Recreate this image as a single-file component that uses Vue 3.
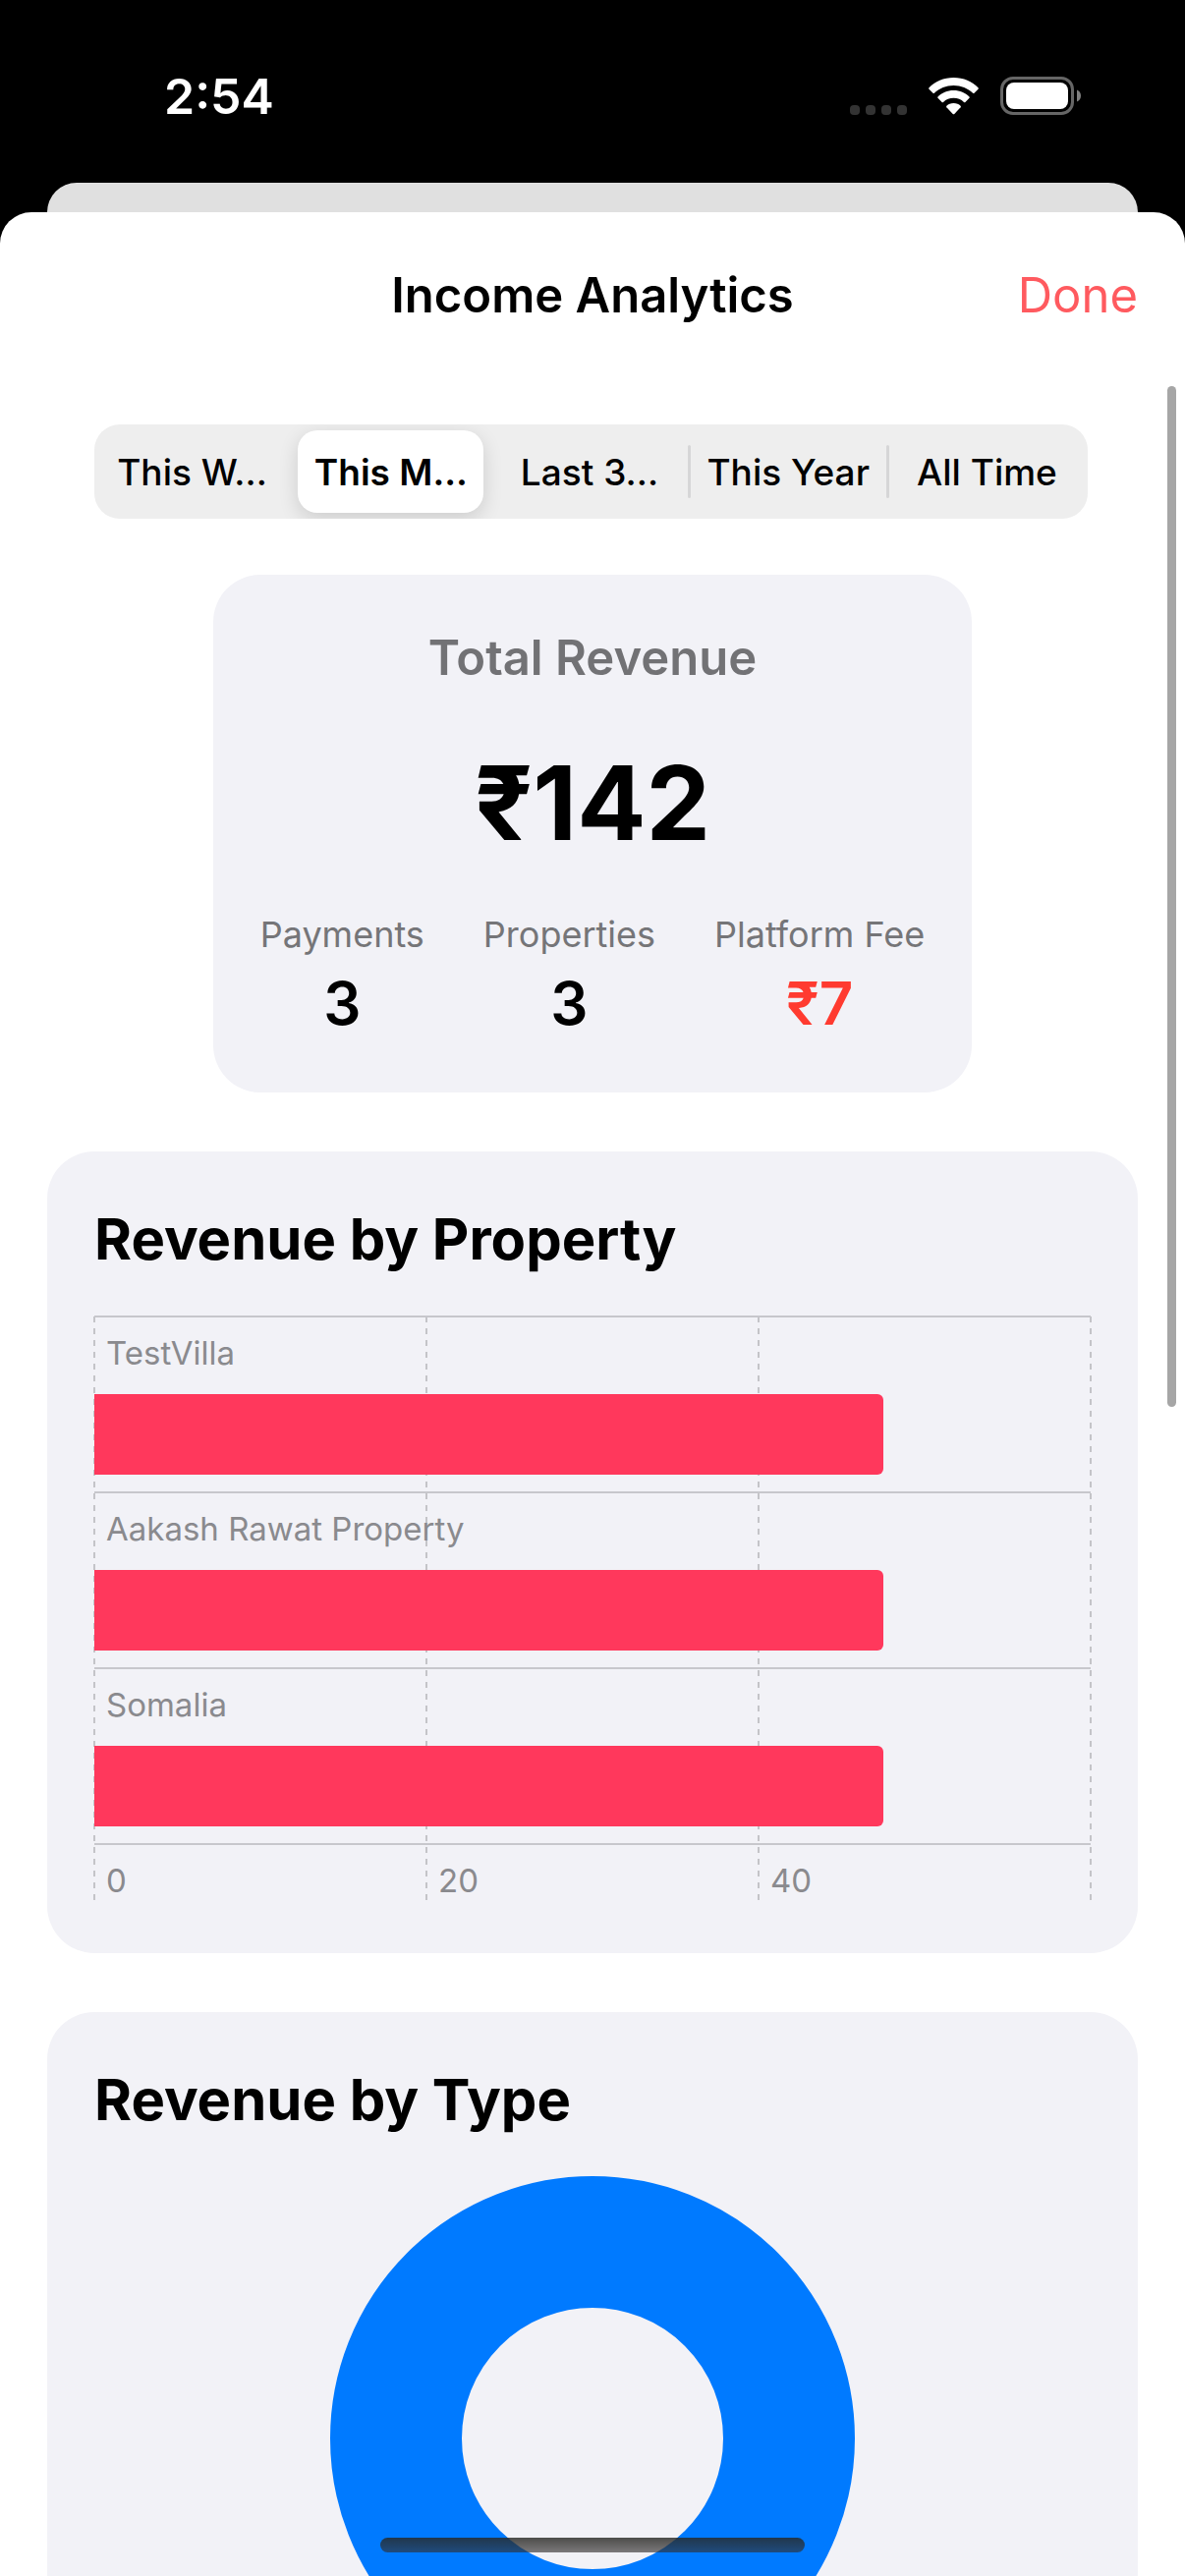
<script setup>
import { ref } from 'vue'

const periods = [
  { label: 'This W…', name: 'This Week' },
  { label: 'This M…', name: 'This Month' },
  { label: 'Last 3…', name: 'Last 3 Months' },
  { label: 'This Year', name: 'This Year' },
  { label: 'All Time', name: 'All Time' },
]
const selected = ref(1)

const stats = [
  { label: 'Payments', value: '3' },
  { label: 'Properties', value: '3' },
  { label: 'Platform Fee', value: '₹7', fee: true },
]

const axisMax = 60
const ticks = [0, 20, 40]
const properties = [
  { name: 'TestVilla', amount: 47.5 },
  { name: 'Aakash Rawat Property', amount: 47.5 },
  { name: 'Somalia', amount: 47.5 },
]
</script>

<template>
  <div class="screen">
    <div class="status">
      <span class="time">2:54</span>
      <div class="indicators">
        <span class="dots"><i v-for="n in 4" :key="n"></i></span>
        <svg class="wifi" viewBox="0 0 51 38" width="51" height="38" aria-hidden="true">
          <g fill="#fff">
            <path d="M25.500 0C35.500 0 44.500 4 50.500 10.200Q51.200 11 50.500 11.700L46.500 15.700Q45.800 16.300 45.100 15.700C40 10.700 33 7.900 25.500 7.900S11 10.700 5.900 15.700Q5.200 16.300 4.500 15.700L.5 11.700Q-.2 11 .5 10.200C6.500 4 15.500 0 25.500 0Z" />
            <path d="M25.500 13C32 13 37.500 15.500 41.500 19.400Q42.200 20.100 41.500 20.800L37.400 24.900Q36.700 25.500 36 24.900C33.200 22.300 29.500 20.800 25.500 20.800S17.800 22.300 15 24.900Q14.300 25.500 13.600 24.900L9.500 20.800Q8.800 20.100 9.500 19.400C13.500 15.500 19 13 25.500 13Z" />
            <path d="M25.500 26C28.500 26 30.800 27 32.600 28.700Q33.300 29.400 32.600 30.200L26.300 37Q25.500 37.700 24.700 37L18.400 30.200Q17.700 29.400 18.400 28.700C20.200 27 22.500 26 25.500 26Z" />
          </g>
        </svg>
        <svg class="battery" viewBox="0 0 82 39" width="82" height="39" aria-hidden="true">
          <rect x="1.500" y="1.500" width="72" height="36" rx="11.500" fill="none" stroke="#666" stroke-width="3" />
          <rect x="6" y="6" width="63" height="27" rx="8" fill="#fff" />
          <path d="M78 13.500C80.500 14.500 82 16.800 82 19.500S80.500 24.500 78 25.500Z" fill="#808080" />
        </svg>
      </div>
    </div>

    <div class="behind"></div>

    <main class="sheet">
      <header class="header">
        <h1>Income Analytics</h1>
        <button type="button" class="done">Done</button>
      </header>

      <div class="segments" role="group" aria-label="Period">
        <template v-for="(p, i) in periods" :key="p.name">
          <span v-if="i > 0" class="divider" :class="{ hidden: i === selected || i === selected + 1 }"></span>
          <button
            type="button"
            class="segment"
            :class="{ active: i === selected }"
            :aria-pressed="i === selected"
            :title="p.name"
            @click="selected = i"
          >{{ p.label }}</button>
        </template>
      </div>

      <section class="card summary">
        <h2 class="summary-title">Total Revenue</h2>
        <p class="amount">₹142</p>
        <dl class="stats">
          <div v-for="s in stats" :key="s.label">
            <dt>{{ s.label }}</dt>
            <dd :class="{ fee: s.fee }">{{ s.value }}</dd>
          </div>
        </dl>
      </section>

      <section class="card">
        <h2 class="card-title">Revenue by Property</h2>
        <div class="chart">
          <div class="grid-lines"><i v-for="n in 4" :key="n"></i></div>
          <div class="rows">
            <div v-for="p in properties" :key="p.name" class="row">
              <span class="chart-label">{{ p.name }}</span>
              <div class="bar" :style="{ width: (p.amount / axisMax) * 100 + '%' }"></div>
            </div>
            <div class="axis">
              <span v-for="t in ticks" :key="t" class="chart-label">{{ t }}</span>
            </div>
          </div>
        </div>
      </section>

      <section class="card">
        <h2 class="card-title">Revenue by Type</h2>
        <svg class="donut" viewBox="0 0 534 534" role="img" aria-label="Revenue by type">
          <circle cx="267" cy="267" r="200" fill="none" stroke="#007aff" stroke-width="134" />
        </svg>
      </section>
    </main>

    <div class="scrollbar"></div>
    <div class="home"></div>
  </div>
</template>

<style>
body {
  margin: 0;
  background: #000;
}
</style>

<style scoped>
.screen {
  position: relative;
  display: flex;
  flex-direction: column;
  height: 100vh;
  overflow: hidden;
  background: #000;
  color: #000;
  font-family: Inter, "Liberation Sans", sans-serif;
}
h1, h2, p, dl, dd {
  margin: 0;
}
button {
  border: 0;
  padding: 0;
  background: none;
  color: inherit;
  font-family: inherit;
}
.status {
  flex: none;
  display: flex;
  justify-content: space-between;
  align-items: center;
  height: 186px;
  padding: 9px 106px 0 167px;
  box-sizing: border-box;
  color: #fff;
}
.time {
  font-size: 50px;
  line-height: 60px;
  font-weight: 600;
}
.indicators {
  display: flex;
  align-items: center;
}
.dots {
  display: flex;
  gap: 6px;
  margin: 28px 22px 0 0;
}
.dots i {
  width: 10px;
  height: 10px;
  border-radius: 4px;
  background: #333;
}
.battery {
  margin-left: 22px;
}
.behind {
  flex: none;
  height: 60px;
  margin: 0 48px -30px;
  border-radius: 30px 30px 0 0;
  background: #e0e0e0;
}
.sheet {
  flex: 1;
  min-height: 0;
  display: flex;
  flex-direction: column;
  overflow: hidden;
  border-radius: 32px 32px 0 0;
  background: #fff;
}
.header {
  flex: none;
  display: grid;
  grid-template-columns: 1fr auto 1fr;
  align-items: center;
  height: 170px;
  padding: 0 48px;
}
.header h1 {
  grid-column: 2;
  font-size: 49px;
  line-height: 60px;
  font-weight: 600;
}
.done {
  justify-self: end;
  color: #ff5a5f;
  font-size: 49px;
  line-height: 60px;
}
.segments {
  flex: none;
  display: flex;
  align-items: center;
  height: 96px;
  margin: 46px 99px 0 96px;
  padding-right: 3px;
  box-sizing: border-box;
  border-radius: 26px;
  overflow: hidden;
  background: #eeeeee;
}
.segment {
  flex: 1 1 0;
  height: 84px;
  margin: 0 5px;
  border-radius: 20px;
  font-size: 37px;
  font-weight: 500;
  white-space: nowrap;
}
.segment.active {
  background: #fff;
  font-weight: 600;
  box-shadow: 0 6px 20px rgba(0, 0, 0, 0.14);
}
.divider {
  width: 3px;
  height: 54px;
  border-radius: 2px;
  background: #d6d6d7;
}
.divider.hidden {
  visibility: hidden;
}
.card {
  flex: none;
  display: flex;
  flex-direction: column;
  margin: 60px 48px 0;
  padding: 48px 48px 54px;
  border-radius: 48px;
  background: #f2f2f7;
}
.summary {
  align-self: center;
  gap: 48px;
  margin-top: 57px;
  padding-bottom: 57px;
  text-align: center;
}
.summary-title {
  color: #727275;
  font-size: 49px;
  line-height: 74px;
  font-weight: 600;
}
.amount {
  font-size: 104px;
  line-height: 124px;
  font-weight: 700;
}
.stats {
  display: flex;
  gap: 60px;
}
.stats dt {
  margin-bottom: 12px;
  color: #757578;
  font-size: 36px;
  line-height: 48px;
}
.stats dd {
  font-size: 60px;
  line-height: 68px;
  font-weight: 600;
}
.stats .fee {
  color: #ff3b30;
}
.card-title {
  margin-bottom: 37px;
  font-size: 58px;
  line-height: 82px;
  font-weight: 700;
}
.chart {
  display: grid;
}
.grid-lines,
.rows {
  grid-area: 1 / 1;
}
.grid-lines {
  display: flex;
  justify-content: space-between;
  margin: 1px -1px 0;
}
.grid-lines i {
  width: 2px;
  background: repeating-linear-gradient(#c4c4c8 0 6px, transparent 6px 12px);
}
.rows {
  z-index: 1;
}
.row {
  border-top: 2px solid #c7c7cc;
  padding: 16px 0 17px;
}
.chart-label {
  display: block;
  padding-left: 12px;
  color: #8a8a8e;
  font-size: 33px;
  line-height: 40px;
}
.bar {
  height: 82px;
  margin-top: 22px;
  border-radius: 0 6px 6px 0;
  background: #ff385c;
}
.axis {
  display: grid;
  grid-template-columns: repeat(3, 1fr);
  padding-top: 16px;
  border-top: 2px solid #c7c7cc;
}
.donut {
  align-self: center;
  width: 534px;
  height: 534px;
}
.scrollbar {
  position: absolute;
  top: 393px;
  right: 9px;
  width: 9px;
  height: 1039px;
  border-radius: 5px;
  background: #a6a6a6;
}
.home {
  position: absolute;
  bottom: 24px;
  left: 50%;
  width: 432px;
  height: 15px;
  border-radius: 8px;
  transform: translateX(-50%);
  background: linear-gradient(rgba(40, 40, 36, 0.82), rgba(50, 46, 46, 0.62));
}
</style>
